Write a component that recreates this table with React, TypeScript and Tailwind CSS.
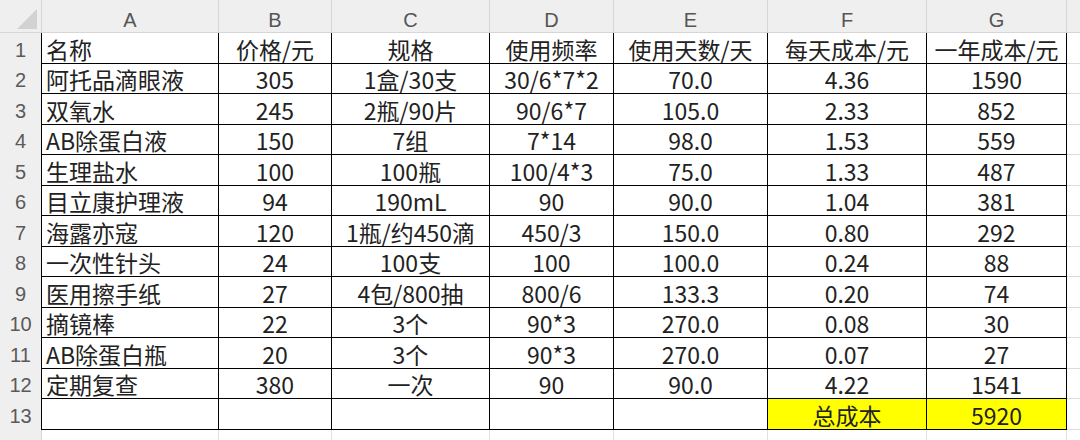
import React from "react";

const cols = ["A", "B", "C", "D", "E", "F", "G"];

const rows: string[][] = [
  ["名称", "价格/元", "规格", "使用频率", "使用天数/天", "每天成本/元", "一年成本/元"],
  ["阿托品滴眼液", "305", "1盒/30支", "30/6*7*2", "70.0", "4.36", "1590"],
  ["双氧水", "245", "2瓶/90片", "90/6*7", "105.0", "2.33", "852"],
  ["AB除蛋白液", "150", "7组", "7*14", "98.0", "1.53", "559"],
  ["生理盐水", "100", "100瓶", "100/4*3", "75.0", "1.33", "487"],
  ["目立康护理液", "94", "190mL", "90", "90.0", "1.04", "381"],
  ["海露亦寇", "120", "1瓶/约450滴", "450/3", "150.0", "0.80", "292"],
  ["一次性针头", "24", "100支", "100", "100.0", "0.24", "88"],
  ["医用擦手纸", "27", "4包/800抽", "800/6", "133.3", "0.20", "74"],
  ["摘镜棒", "22", "3个", "90*3", "270.0", "0.08", "30"],
  ["AB除蛋白瓶", "20", "3个", "90*3", "270.0", "0.07", "27"],
  ["定期复查", "380", "一次", "90", "90.0", "4.22", "1541"],
  ["", "", "", "", "", "总成本", "5920"],
];

const gridCols =
  "grid grid-cols-[42px_177px_113px_158px_124px_154px_159px_140px_1fr]";

const font = { fontFamily: '"Noto Sans CJK SC", "Liberation Sans", sans-serif' };

function Cell({ text, col, row }: { text: string; col: number; row: number }) {
  const yellow = row === 12 && col >= 5;
  return (
    <div
      className={`h-[30.5px] flex items-end whitespace-nowrap border-r border-b border-black text-[23px] leading-[26px] text-[#222222] ${
        col === 0 ? "justify-start pl-[4px]" : "justify-center"
      } ${yellow ? "bg-[#ffff00]" : "bg-white"}`}
    >
      <span className="pb-[1px]">{text}</span>
    </div>
  );
}

export default function App() {
  return (
    <div className="w-[1080px] h-[440px] overflow-hidden bg-white" style={font}>
      <div className={`${gridCols} h-[33px] bg-[#efefef] border-b border-[#d6d6d6]`}>
        <div className="relative border-r border-[#d6d6d6]">
          <svg className="absolute left-0 top-0" width="42" height="33" viewBox="0 0 42 33">
            <polygon points="37,9 37,29 17,29" fill="#d2d2d2" />
          </svg>
        </div>
        {cols.map((c) => (
          <div
            key={c}
            className="flex items-end justify-center border-r border-[#d6d6d6] text-[20px] leading-none text-[#555555] pb-[2px]"
            style={{ fontFamily: '"Liberation Sans", "Noto Sans", sans-serif' }}
          >
            <span>{c}</span>
          </div>
        ))}
        <div />
      </div>
      {rows.map((r, ri) => (
        <div key={ri} className={gridCols}>
          <div
            className="h-[30.5px] flex items-end justify-center bg-[#efefef] border-r border-black text-[20px] leading-[24px] text-[#5a5a5a] pb-[2px]"
            style={{ fontFamily: '"Liberation Sans", "Noto Sans", sans-serif' }}
          >
            <span>{ri + 1}</span>
          </div>
          {r.map((t, ci) => (
            <Cell key={ci} text={t} col={ci} row={ri} />
          ))}
          <div className="h-[30.5px] border-b border-[#dcdcdc] bg-white" />
        </div>
      ))}
      <div className={gridCols}>
        <div className="h-[12px] bg-[#efefef] border-r border-[#d6d6d6]" />
        {cols.map((c) => (
          <div key={c} className="h-[12px] border-r border-[#e2e2e2] bg-white" />
        ))}
        <div />
      </div>
    </div>
  );
}
